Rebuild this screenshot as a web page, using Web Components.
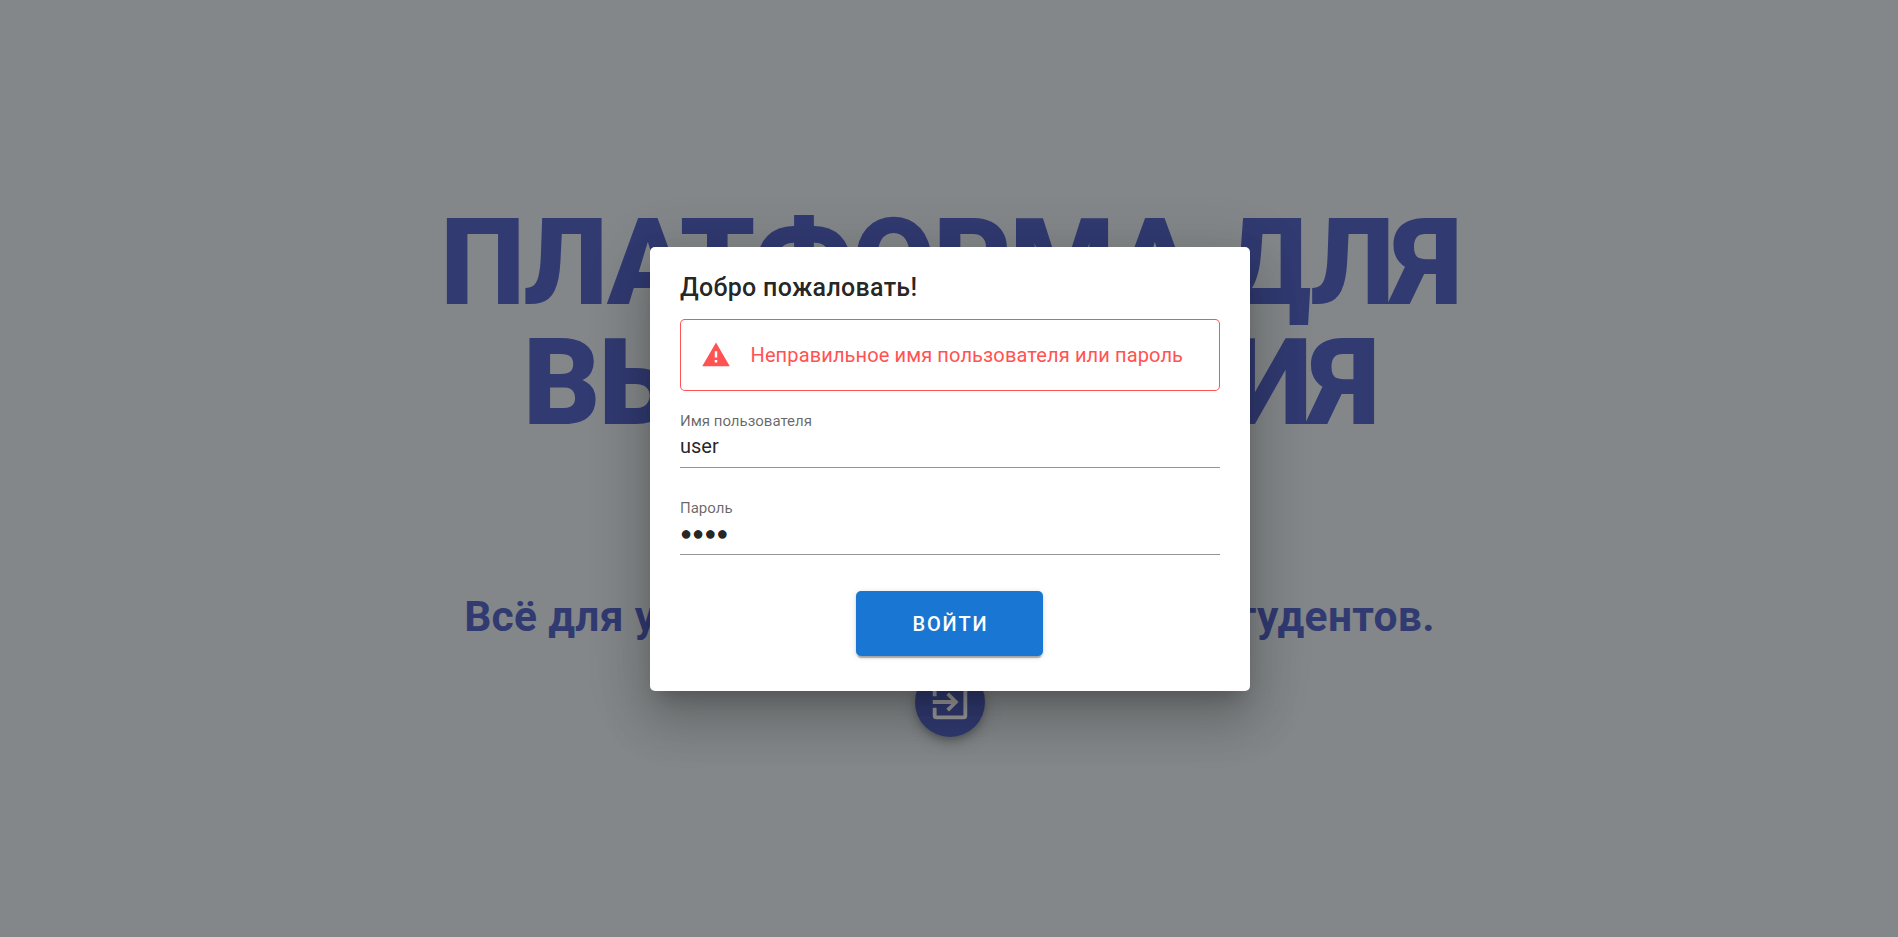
<!DOCTYPE html>
<html lang="ru"><head><meta charset="utf-8"><title>Вход</title>
<style>html,body{margin:0;height:100%;overflow:hidden}body{font-family:Roboto,sans-serif;font-size:20px;line-height:1.5}</style></head>
<body>
<login-page>
<welcome-hero>
<span slot="title">ПЛАТФОРМА ДЛЯ ВЫСТАВЛЕНИЯ</span>
<span slot="subtitle">Всё для удобства преподавателей и студентов.</span>
</welcome-hero>
<login-card slot="dialog" heading="Добро пожаловать!">
<alert-box>Неправильное имя пользователя или пароль</alert-box>
<text-field label="Имя пользователя" value="user"></text-field>
<text-field label="Пароль" value="●●●●"></text-field>
<raised-button>Войти</raised-button>
</login-card>
</login-page>
<script>
const define=(name,html,setup)=>customElements.define(name,class extends HTMLElement{
  connectedCallback(){
    if(this.shadowRoot)return;
    const t=document.createElement('template');t.innerHTML=html;
    this.attachShadow({mode:'open'}).append(t.content.cloneNode(true));
    if(setup)setup(this,this.shadowRoot);
  }
});
define('login-page',`<style>
:host{display:block;height:937px;box-sizing:border-box;padding-left:2px;background:#d7dee2}
.overlay{position:absolute;inset:0;box-sizing:border-box;padding:1px 0 0 2px;background:rgba(33,33,33,.46);display:flex;align-items:center;justify-content:center}
</style><slot></slot><div class="overlay"><slot name="dialog"></slot></div>`);
define('welcome-hero',`<style>
:host{display:flex;flex-direction:column;align-items:center;height:100%;box-sizing:border-box;padding-top:203px;color:#3f51b5;text-align:center}
h1{margin:0;width:1126px;font-size:120px;line-height:120px;font-weight:900;letter-spacing:-.015625em}
h2{margin:149px 1px 0 0;font-size:42.5px;line-height:50px;font-weight:700;letter-spacing:.00735em;white-space:nowrap}
.fab{margin-top:25px;width:70px;height:70px;border-radius:50%;background:#3f51b5;display:flex;align-items:center;justify-content:center;box-shadow:0 4px 6px -1px rgba(0,0,0,.2),0 7px 12px rgba(0,0,0,.14),0 1px 22px rgba(0,0,0,.12)}
svg{width:46px;height:46px;margin-right:1px;fill:#fff}
</style><h1><slot name="title"></slot></h1><h2><slot name="subtitle"></slot></h2>
<div class="fab"><svg viewBox="0 0 24 24"><path d="M19,3H5C3.89,3 3,3.89 3,5V9H5V5H19V19H5V15H3V19A2,2 0 0,0 5,21H19A2,2 0 0,0 21,19V5C21,3.89 20.1,3 19,3M10.08,15.58L11.5,17L16.5,12L11.5,7L10.08,8.41L12.67,11H3V13H12.67L10.08,15.58Z"/></svg></div>`);
define('login-card',`<style>
:host{display:flex;flex-direction:column;box-sizing:border-box;width:600px;height:444px;padding:21px 30px 20px;background:#fff;border-radius:5px;color:rgba(0,0,0,.87);box-shadow:0 14px 19px -9px rgba(0,0,0,.2),0 30px 48px 4px rgba(0,0,0,.14),0 11px 58px 10px rgba(0,0,0,.12)}
h3{margin:0 0 11px;font-size:25px;line-height:40px;font-weight:500;letter-spacing:.0125em}
</style><h3></h3><slot></slot>`,(el,r)=>r.querySelector('h3').textContent=el.getAttribute('heading'));
define('alert-box',`<style>
:host{display:flex;align-items:center;gap:20px;box-sizing:border-box;height:72px;padding:0 20.5px;box-shadow:inset 0 0 0 1px #ff5252;border-radius:5px;color:#ff5252;font-size:20px;letter-spacing:.125px;white-space:nowrap}
svg{width:30px;height:30px;fill:currentColor;flex:none}
</style><svg viewBox="0 0 24 24"><path d="M13 14H11V9H13M13 18H11V16H13M1 21H23L12 2L1 21Z"/></svg><span><slot></slot></span>`);
define('text-field',`<style>
:host{display:flex;flex-direction:column;height:61px;margin-top:15px;margin-bottom:10px;border-bottom:1px solid #949494}
label{font-size:15px;line-height:20px;padding-top:5px;color:rgba(0,0,0,.6)}
input{border:0;outline:0;padding:0;margin:0;height:30px;background:none;font:20px Roboto,sans-serif;color:rgba(0,0,0,.87);width:100%}
</style><label></label><input>`,(el,r)=>{r.querySelector('label').textContent=el.getAttribute('label');r.querySelector('input').value=el.getAttribute('value')});
define('raised-button',`<style>
:host{display:flex;justify-content:center;margin:26px 1px 0 0}
button{box-sizing:border-box;width:187px;height:65px;padding:0 0 0 2px;border:0;border-radius:5px;background:#1976d2;color:#fff;font:500 20px Roboto,sans-serif;letter-spacing:.0892857em;text-transform:uppercase;box-shadow:0 4px 1px -2px rgba(0,0,0,.2),0 2px 2px rgba(0,0,0,.14),0 1px 6px rgba(0,0,0,.12)}
</style><button><slot></slot></button>`);
</script></body></html>
